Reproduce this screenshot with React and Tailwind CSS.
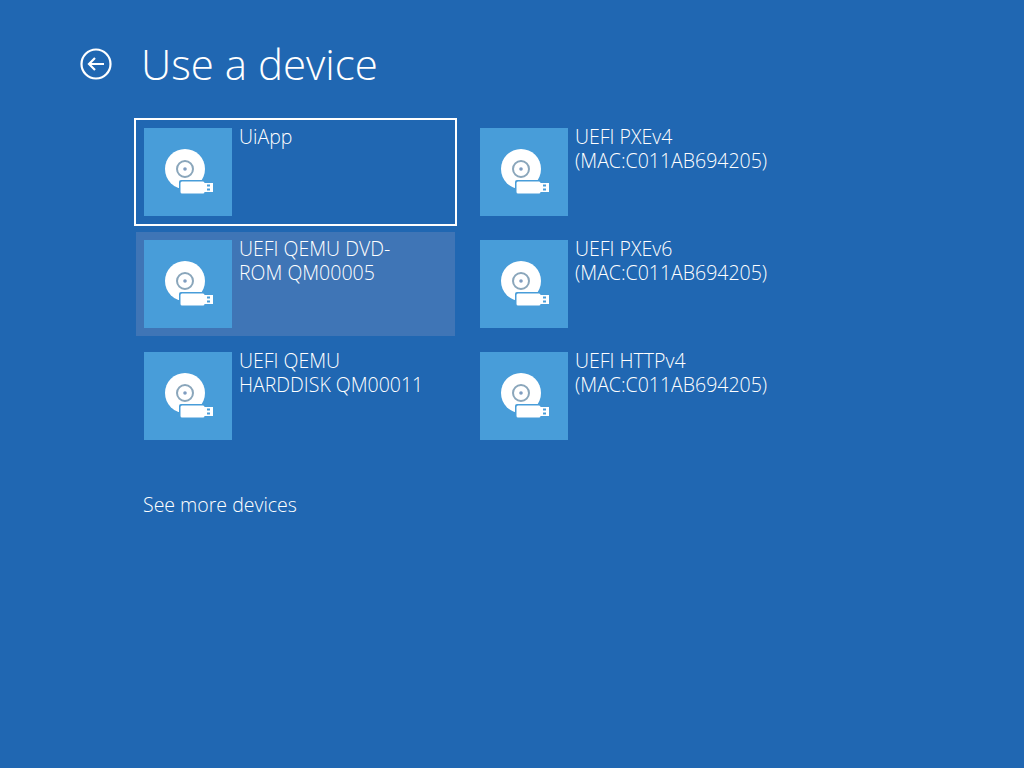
import React from 'react';

const devices = [
  { name: ['UiApp'], selected: true },
  { name: ['UEFI PXEv4', '(MAC:C011AB694205)'] },
  { name: ['UEFI QEMU DVD-', 'ROM QM00005'], hover: true },
  { name: ['UEFI PXEv6', '(MAC:C011AB694205)'] },
  { name: ['UEFI QEMU', 'HARDDISK QM00011'] },
  { name: ['UEFI HTTPv4', '(MAC:C011AB694205)'] },
];

const DiscIcon = () => (
  <svg width="88" height="88" viewBox="0 0 88 88">
    <circle cx="41" cy="41" r="20" fill="#fff" />
    <circle cx="41" cy="41" r="8" fill="none" stroke="#8aa6bb" strokeWidth="2" />
    <circle cx="41" cy="41" r="1.8" fill="#7f9cc0" />
    <rect x="35" y="52" width="26" height="15" rx="2" fill="#489dd9" />
    <rect x="36.5" y="53.5" width="24" height="12" rx="1.5" fill="#fff" />
    <rect x="60" y="55" width="9" height="9" fill="#fff" />
    <rect x="63" y="56.5" width="3" height="2" fill="#489dd9" />
    <rect x="63" y="60.5" width="3" height="2" fill="#489dd9" />
  </svg>
);

const DeviceTile = ({ device }) => (
  <div
    className={`flex h-[104px] w-[319px] gap-[7px] p-2 ${device.hover ? 'bg-[#3f75b6]' : ''} ${device.selected ? 'outline-2 outline-white' : ''}`}
  >
    <div className="h-[88px] w-[88px] shrink-0 bg-[#489dd9]">
      <DiscIcon />
    </div>
    <div className="-mt-[3px] text-[19.5px] leading-[24px] font-light text-white">
      {device.name[0]}
      {device.name[1] && <br />}
      {device.name[1]}
    </div>
  </div>
);

export default function App() {
  return (
    <div className="h-[768px] overflow-hidden bg-[#2067b2] font-['Open_Sans',sans-serif] text-white">
      <div className="flex items-center gap-[30px] pl-[80px] pt-[32px]">
        <svg width="32" height="32" viewBox="0 0 32 32" fill="none" stroke="#fff" strokeWidth="2.2">
          <circle cx="16" cy="16" r="14.5" />
          <path d="M24 16H9M15 10l-6 6 6 6" />
        </svg>
        <h1 className="-ml-px text-[42px] leading-[64px] font-light">Use a device</h1>
      </div>
      <div className="ml-[136px] mt-[24px] grid w-[655px] grid-cols-[319px_319px] gap-x-[17px] gap-y-2">
        {devices.map((device) => (
          <DeviceTile key={device.name.join(' ')} device={device} />
        ))}
      </div>
      <div className="ml-[143px] mt-[43px] text-[19.5px] leading-[28px] font-light text-white">See more devices</div>
    </div>
  );
}
